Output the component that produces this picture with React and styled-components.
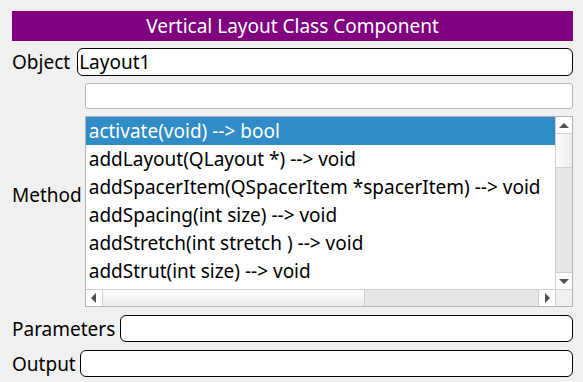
import React from 'react';
import styled, {createGlobalStyle} from 'styled-components';

const Global = createGlobalStyle`
  html, body {
    margin: 0;
    background: #f0f0f0;
  }
  body {
    font-family: "Noto Sans", "DejaVu Sans", sans-serif;
    color: #000;
  }
`;

const Panel = styled.div`
  display: flex;
  flex-direction: column;
  gap: 7px;
  padding: 11px 10px 5px 12px;
  width: 583px;
  box-sizing: border-box;
`;

const Header = styled.div`
  background: #800080;
  color: #fff;
  height: 30px;
  display: flex;
  align-items: center;
  justify-content: center;
  font-size: 19px;
`;

const Row = styled.div`
  display: flex;
  align-items: stretch;
  gap: ${p => p.$gap || 4}px;
  margin-top: ${p => p.$push || 0}px;
`;

const Label = styled.div`
  font-size: 19px;
  display: flex;
  align-items: center;
  white-space: nowrap;
`;

const Field = styled.div`
  flex: ${p => (p.$plain ? 'none' : '1')};
  height: ${p => p.$h || 27}px;
  box-sizing: border-box;
  background: #fff;
  border: 1px solid ${p => (p.$plain ? '#b4b4b4' : '#000')};
  border-radius: ${p => (p.$plain ? 3 : 6)}px;
  font-size: 19px;
  display: flex;
  align-items: center;
  padding-left: 1px;
`;

const Column = styled.div`
  flex: 1;
  display: flex;
  flex-direction: column;
  gap: 7px;
`;

const List = styled.div`
  height: 191px;
  box-sizing: border-box;
  border: 1px solid #b4b4b4;
  background: #fff;
  display: grid;
  grid-template-columns: 1fr 17px;
  grid-template-rows: 1fr 17px;
`;

const Items = styled.div`
  overflow: hidden;
`;

const Item = styled.div`
  height: 28px;
  line-height: 28px;
  padding-left: 3px;
  font-size: 19px;
  white-space: nowrap;
  background: ${p => (p.$selected ? '#308cc6' : 'transparent')};
  color: ${p => (p.$selected ? '#fff' : '#000')};
`;

const VBar = styled.div`
  display: flex;
  flex-direction: column;
  background: #e6e6e6;
  border-left: 1px solid #d0d0d0;
`;

const HBar = styled.div`
  display: flex;
  background: #e6e6e6;
  border-top: 1px solid #d0d0d0;
`;

const ArrowBtn = styled.div`
  width: ${p => (p.$horizontal ? 17 : 16)}px;
  height: ${p => (p.$horizontal ? 16 : 17)}px;
  flex: none;
  background: #fff;
  display: flex;
  align-items: center;
  justify-content: center;
  box-sizing: border-box;
  border-${p => p.$edge}: 1px solid #d0d0d0;
`;

const Handle = styled.div`
  flex: none;
  box-sizing: border-box;
  background: ${p => (p.$horizontal
    ? 'linear-gradient(to bottom, #ffffff, #ececec)'
    : 'linear-gradient(to right, #ffffff, #ececec)')};
  border-${p => (p.$horizontal ? 'right' : 'bottom')}: 1px solid #d0d0d0;
`;

const Track = styled.div`
  flex: 1;
`;

const Corner = styled.div`
  background: #f0f0f0;
  border-left: 1px solid #d0d0d0;
  border-top: 1px solid #d0d0d0;
`;

const Arrow = ({dir}) => {
  const pts = {
    up: '0,5 5,0 10,5',
    down: '0,0 5,5 10,0',
    left: '5,0 0,5 5,10',
    right: '0,0 5,5 0,10',
  }[dir];
  const horiz = dir === 'left' || dir === 'right';
  return (
    <svg width={horiz ? 5 : 10} height={horiz ? 10 : 5} viewBox={horiz ? '0 0 5 10' : '0 0 10 5'}>
      <polygon points={pts} fill="#505050"/>
    </svg>
  );
};

const methods = [
  'activate(void) --> bool',
  'addLayout(QLayout *) --> void',
  'addSpacerItem(QSpacerItem *spacerItem) --> void',
  'addSpacing(int size) --> void',
  'addStretch(int stretch ) --> void',
  'addStrut(int size) --> void',
];

export default function App() {
  return (
    <>
      <Global/>
      <Panel>
        <Header>Vertical Layout Class Component</Header>
        <Row $gap={7}>
          <Label>Object</Label>
          <Field $h={28}>Layout1</Field>
        </Row>
        <Row $gap={3}>
          <Label>Method</Label>
          <Column>
            <Field $plain $h={26}/>
            <List>
              <Items>
                {methods.map((m, i) => (
                  <Item key={m} $selected={i === 0}>{m}</Item>
                ))}
              </Items>
              <VBar>
                <ArrowBtn $edge="bottom"><Arrow dir="up"/></ArrowBtn>
                <Handle style={{height: 34}}/>
                <Track/>
                <ArrowBtn $edge="top"><Arrow dir="down"/></ArrowBtn>
              </VBar>
              <HBar>
                <ArrowBtn $horizontal $edge="right"><Arrow dir="left"/></ArrowBtn>
                <Handle $horizontal style={{width: 262}}/>
                <Track/>
                <ArrowBtn $horizontal $edge="left"><Arrow dir="right"/></ArrowBtn>
              </HBar>
              <Corner/>
            </List>
          </Column>
        </Row>
        <Row $gap={5} $push={1}>
          <Label>Parameters</Label>
          <Field/>
        </Row>
        <Row $gap={4} $push={1}>
          <Label>Output</Label>
          <Field/>
        </Row>
      </Panel>
    </>
  );
}
